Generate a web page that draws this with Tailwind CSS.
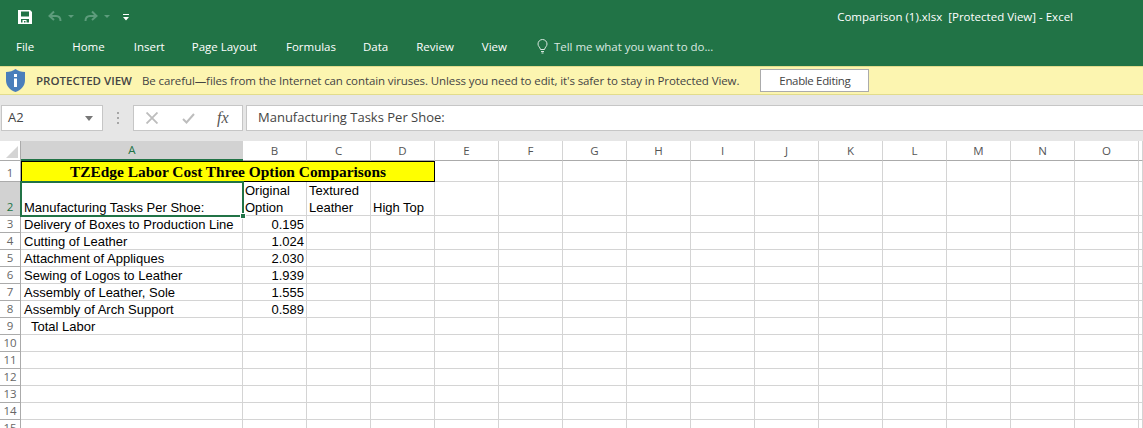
<!DOCTYPE html>
<html lang="en">
<head>
  <meta charset="UTF-8">
  <title>Comparison (1).xlsx [Protected View] - Excel</title>
  <script src="https://cdn.jsdelivr.net/npm/@tailwindcss/browser@4"></script>
</head>
<body class="h-[428px] w-[1143px] overflow-hidden bg-white font-['Open_Sans',sans-serif]">
  <!-- title bar + ribbon tabs -->
  <header class="h-[66px] bg-[#217346] text-white">
    <div class="flex h-[33px] items-center justify-between">
      <div class="flex items-center pl-[18px]">
        <svg width="14" height="14" viewBox="0 0 14 14"><path fill="#fff" fill-rule="evenodd" d="M0 0h12l2 2v12H0zM3 1.500v5h8v-5zM3 9v3.500h1.500V10h4v2.500H11V9zM6 11v1.500h1.500V11z"/></svg>
        <svg class="ml-[15px]" width="16" height="14" viewBox="0 0 16 14" fill="none" stroke="#5d9c7c" stroke-width="2"><path d="M7 1.500 2.500 6 7 10M3 6h6c3 0 4.500 1.500 4.500 5"/></svg>
        <svg class="ml-[5px]" width="6" height="4" viewBox="0 0 6 4"><path fill="#5d9c7c" d="M0 0h6L3 3z"/></svg>
        <svg class="ml-[9px]" width="16" height="14" viewBox="0 0 16 14" fill="none" stroke="#5d9c7c" stroke-width="2"><path d="M9 1.500 13.500 6 9 10M13 6H7c-3 0-4.500 1.500-4.500 5"/></svg>
        <svg class="ml-[5px]" width="6" height="4" viewBox="0 0 6 4"><path fill="#5d9c7c" d="M0 0h6L3 3z"/></svg>
        <svg class="ml-[13px] mt-[2px]" width="6" height="7" viewBox="0 0 6 7"><path fill="#fff" d="M0 0h6v1H0zM0 3h6L3 6.500z"/></svg>
      </div>
      <div class="pr-[70px] text-[11.5px] text-white">Comparison (1).xlsx&nbsp; [Protected View] - Excel</div>
    </div>
    <nav class="flex h-[33px] items-center pb-[6px] text-[11.5px]">
      <span class="ml-[16px]">File</span>
      <span class="ml-[38px]">Home</span>
      <span class="ml-[29px]">Insert</span>
      <span class="ml-[27px]">Page Layout</span>
      <span class="ml-[29px]">Formulas</span>
      <span class="ml-[27px]">Data</span>
      <span class="ml-[28px]">Review</span>
      <span class="ml-[28px]">View</span>
      <svg class="ml-[30px]" width="11" height="15" viewBox="0 0 11 15" fill="none" stroke="#d9e8e0"><path d="M3.500 10.500C3 8 1 7.500 1 5a4.500 4.500 0 0 1 9 0c0 2.500-2 3-2.500 5.500zM4 12.500h3M4.500 14h2"/></svg>
      <span class="ml-[6px] tracking-[-0.03px] text-[#d9e8e0]">Tell me what you want to do...</span>
    </nav>
  </header>

  <!-- protected view message bar -->
  <div class="flex h-[29px] items-center border-y border-[#e2dc8c] bg-[#fcf5b0] text-[11.5px] text-[#444]">
    <svg class="ml-[6px]" width="19" height="23" viewBox="0 0 19 23"><path fill="#4a7ebb" d="M9.500 0C7 2 4 3 0 3v8c0 6 4 10 9.500 12C15 21 19 17 19 11V3c-4 0-7-1-9.500-3z"/><path fill="#fff" d="M8 5h3v3H8zM8 9.500h3V18H8z"/></svg>
    <span class="ml-[11px] font-semibold">PROTECTED VIEW</span>
    <span class="ml-[10px] tracking-[-0.1px]">Be careful—files from the Internet can contain viruses. Unless you need to edit, it's safer to stay in Protected View.</span>
    <button class="ml-[21px] h-[23px] w-[109px] border border-[#ababab] bg-white text-center text-[11.5px] tracking-[-0.35px] text-[#444]">Enable Editing</button>
  </div>

  <!-- formula bar -->
  <div class="flex h-[46px] items-center bg-[#e6e6e6]">
    <div class="ml-[1px] flex h-[26px] w-[102px] items-center justify-between border border-[#c6c6c6] bg-white pl-[6px] pr-[9px] text-[13px] text-[#444]">
      <span>A2</span>
      <svg width="8" height="5" viewBox="0 0 8 5"><path fill="#777" d="M0 0h8L4 5z"/></svg>
    </div>
    <div class="ml-[14px] flex w-[3px] flex-col gap-[3px]">
      <i class="h-[2px] w-[2px] bg-[#a6a6a6]"></i><i class="h-[2px] w-[2px] bg-[#a6a6a6]"></i><i class="h-[2px] w-[2px] bg-[#a6a6a6]"></i>
    </div>
    <div class="ml-[13px] flex h-[26px] w-[110px] items-center border border-[#c6c6c6] bg-white">
      <svg class="ml-[12px]" width="12" height="12" viewBox="0 0 11 11" stroke="#bdbdbd" stroke-width="1.700"><path d="M.5.500l10 10M10.500.500l-10 10"/></svg>
      <svg class="ml-[24px]" width="13" height="11" viewBox="0 0 13 11" fill="none" stroke="#bdbdbd" stroke-width="2"><path d="M1 6l3.500 3.500L12 1"/></svg>
      <span class="ml-[22px] font-['Liberation_Serif',serif] text-[16px] italic text-[#555]">fx</span>
    </div>
    <div class="ml-[3px] flex h-[26px] flex-1 items-center border-y border-l border-[#c6c6c6] bg-white pl-[11px] text-[13px] text-[#444]">Manufacturing Tasks Per Shoe:</div>
  </div>

  <!-- worksheet -->
  <main id="sheet" class="relative grid h-[287px] grid-cols-[21px_222px_repeat(14,64px)_1fr] grid-rows-[20px_21px_34px_repeat(13,17px)] overflow-hidden font-['Liberation_Sans',sans-serif] text-[13px] leading-[16px] text-black">
    <div class="relative border-r border-b border-[#ababab] bg-white"><svg class="absolute right-[2px] bottom-[2px]" width="12" height="12" viewBox="0 0 12 12"><path fill="#d4d4d4" d="M12 0v12H0z"/></svg></div>
    <div class="flex items-center justify-center border-b-2 border-[#217346] bg-[#d2d2d2] font-['Open_Sans',sans-serif] text-[11.5px] text-[#217346]">A</div>
    <div id="head" class="contents"></div>

    <div class="flex items-end justify-center border-r border-b border-[#ababab] font-['Open_Sans',sans-serif] text-[11.5px] text-[#666]">1</div>
    <div class="col-span-4 border border-black bg-[#ffff00] text-center font-['Liberation_Serif',serif] text-[15.4px] leading-[19px] font-bold">TZEdge Labor Cost Three Option Comparisons</div>
    <div id="row1" class="contents"></div>

    <div id="rows" class="contents"></div>

    <!-- selected cell A2 -->
    <div class="absolute top-[40px] left-[20px] h-[36px] w-[224px] border-2 border-[#217346]">
      <span class="absolute right-[-4px] bottom-[-4px] h-[6px] w-[6px] border border-white bg-[#217346]"></span>
    </div>
  </main>

  <script>
    const grid = 'border-r border-b border-[#d4d4d4]';
    const rowHead = 'flex items-end justify-center border-r border-b border-[#ababab] font-[\'Open_Sans\',sans-serif] text-[11.5px] leading-[16px] text-[#666]';
    const colHead = 'flex items-center justify-center border-r border-b border-[#d4d4d4] border-b-[#ababab] font-[\'Open_Sans\',sans-serif] text-[11.5px] text-[#555]';

    document.getElementById('head').innerHTML = 'BCDEFGHIJKLMNO'.split('').map(c => `<div class="${colHead}">${c}</div>`).join('') + `<div class="${colHead}"></div>`;
    document.getElementById('row1').innerHTML = Array(12).fill(`<div class="${grid}"></div>`).join('');

    const data = [
      ['Manufacturing Tasks Per Shoe:', 'Original Option', 'Textured Leather', 'High Top'],
      ['Delivery of Boxes to Production Line', '0.195'],
      ['Cutting of Leather', '1.024'],
      ['Attachment of Appliques', '2.030'],
      ['Sewing of Logos to Leather', '1.939'],
      ['Assembly of Leather, Sole', '1.555'],
      ['Assembly of Arch Support', '0.589'],
      ['&nbsp; Total Labor', ''],
      [], [], [], [], [], [], []
    ];

    document.getElementById('rows').innerHTML = data.map((r, i) => {
      const n = i + 2;
      const selected = n === 2;
      const cells = [];
      for (let c = 0; c < 16; c++) {
        const v = r[c] || '';
        if (selected && c > 0 && c < 4) {
          cells.push(`<div class="flex items-end whitespace-normal pl-[2px] ${grid}"><span class="-mb-[1px] leading-[17px]">${v}</span></div>`);
        } else if (c === 1 && !selected) {
          cells.push(`<div class="flex items-end justify-end pr-[2px] leading-[14px] ${grid}">${v}</div>`);
        } else {
          cells.push(`<div class="flex items-end whitespace-nowrap pl-[3px] leading-[14px] ${grid}">${v}</div>`);
        }
      }
      const head = selected
        ? `<div class="${rowHead} bg-[#d2d2d2] text-[#217346]">${n}</div>`
        : `<div class="${rowHead}">${n}</div>`;
      return head + cells.join('');
    }).join('');
  </script>
</body>
</html>
